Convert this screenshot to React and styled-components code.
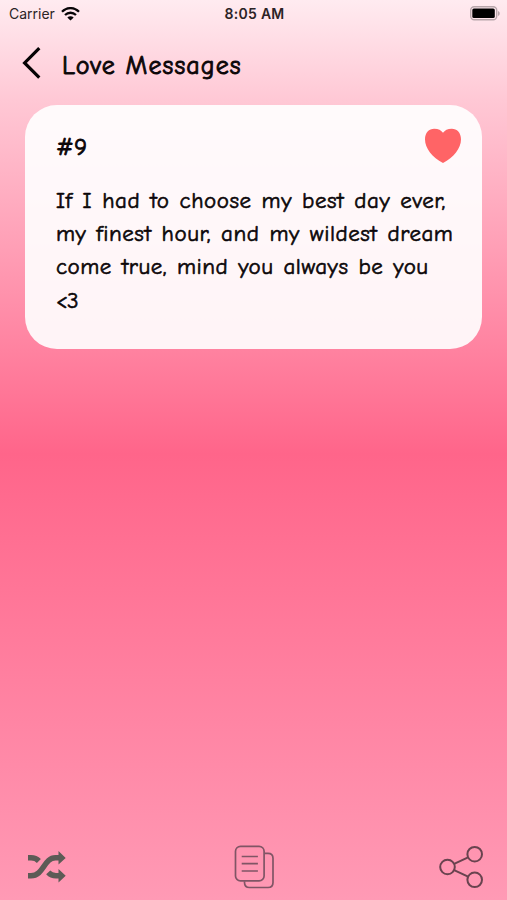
import React, { useState } from "react";
import styled, { createGlobalStyle } from "styled-components";

const GlobalStyle = createGlobalStyle`
  * {
    box-sizing: border-box;
  }
  body {
    margin: 0;
  }
  button {
    display: flex;
    padding: 0;
    border: none;
    background: none;
    cursor: pointer;
  }
  svg {
    display: block;
  }
`;

const Screen = styled.div`
  display: flex;
  flex-direction: column;
  height: 900px;
  color: #0b0608;
  background: linear-gradient(#ffebf0 0, #ffc8d5 100px, #ff658a 454px, #ff9ab5 900px);
  font-family: "Chalkboard SE", "Comic Neue", Lato, sans-serif;
`;

const StatusBar = styled.div`
  display: grid;
  grid-template-columns: 1fr auto 1fr;
  align-items: center;
  height: 27px;
  padding: 0 7px 0 9px;
  font-family: Inter, sans-serif;
  font-size: 14px;
  color: #2b2326;
`;

const Carrier = styled.div`
  display: flex;
  align-items: center;
  gap: 6px;
`;

const Clock = styled.div`
  font-weight: 600;
  letter-spacing: 0.3px;
`;

const Battery = styled.div`
  justify-self: end;
`;

const Header = styled.header`
  display: flex;
  align-items: center;
  height: 78px;
  padding: 0 0 7px 22px;
`;

const Title = styled.h1`
  margin: 7px 0 0 20px;
  font-size: 26px;
  font-weight: 500;
  line-height: 32px;
  letter-spacing: 1.1px;
  -webkit-text-stroke: 0.9px currentColor;
`;

const Card = styled.section`
  height: 244px;
  margin: 0 25px;
  padding: 22px 20px 0 31px;
  border-radius: 32px;
  background: rgba(255, 255, 255, 0.91);
`;

const CardTop = styled.div`
  display: flex;
  justify-content: space-between;
  align-items: flex-start;
  height: 57px;
`;

const Number = styled.div`
  font-size: 24px;
  line-height: 40px;
  letter-spacing: 0.6px;
  -webkit-text-stroke: 0.9px currentColor;
`;

const Message = styled.p`
  margin: 0;
  font-size: 23px;
  line-height: 33.2px;
  white-space: nowrap;
  word-spacing: 1.8px;
  -webkit-text-stroke: 0.6px currentColor;
`;

const Line = styled.span`
  display: block;
  letter-spacing: ${({ $spacing }) => $spacing}px;
`;

const Toolbar = styled.footer`
  display: flex;
  align-items: center;
  justify-content: space-between;
  height: 68px;
  margin-top: auto;
  padding: 1px 23px 0 27px;
`;

const WifiIcon = () => (
  <svg width="19" height="14" viewBox="0 0 19 14" fill="none" stroke="#080507" strokeWidth="2.3">
    <path d="M1 4.8C6-.1 13-.1 18 4.8" />
    <path d="M4 8C7.2 5 11.8 5 15 8" />
    <path d="M6.3 10.4 9.5 13.6l3.2-3.2c-1.8-1.6-4.6-1.6-6.4 0z" fill="#080507" stroke="none" />
  </svg>
);

const BatteryIcon = () => (
  <svg width="30" height="15" viewBox="0 0 30 15">
    <rect x=".7" y=".8" width="26" height="13" rx="3.5" fill="none" stroke="#b7a5aa" strokeWidth="1.4" />
    <rect x="2.3" y="2.5" width="22.5" height="9.6" rx="1.6" fill="#000" />
    <path d="M28 5v5c2.3-1 2.3-4 0-5z" fill="#b7a5aa" />
  </svg>
);

const BackIcon = () => (
  <svg width="20" height="32" viewBox="0 0 20 32" fill="none" stroke="#050304" strokeWidth="3.2">
    <path d="M17.3 1.2 2.6 15.9l14.7 14.8" />
  </svg>
);

const HeartIcon = ({ filled }) => (
  <svg width="38" height="36" viewBox="0 0 38 36">
    <path
      d="M19 36C8.3 30.5 1 21.5 1 12.3 1 5.7 5 1.7 10.200 1.700c4.200 0 7.100 1.600 8.800 4.100 1.700-2.500 4.600-4.100 8.800-4.100C33 1.700 37 5.700 37 12.300 37 21.500 29.700 30.500 19 36z"
      fill={filled ? "#ff6466" : "none"}
      stroke={filled ? "none" : "#ff6466"}
    />
  </svg>
);

const ShuffleIcon = () => (
  <svg width="40" height="34" viewBox="0 0 40 34" fill="none" stroke="#5d5b56" strokeWidth="5.6">
    <path d="M1 7.8h3c3.6 0 5.7.9 7.9 3.1" />
    <path d="M1 25.7h3c12.8 0 12.7-17.9 24.5-17.9H33" />
    <path d="M21.2 22.3c2.3 2.5 4.5 3.4 7.8 3.4h4" />
    <path d="M31.5 1.1 38.7 8l-7.2 6.6zM31.5 19l7.2 6.7-7.2 6.8z" fill="#5d5b56" stroke="none" />
  </svg>
);

const CopyIcon = () => (
  <svg width="42" height="44" viewBox="-2 0 42 44" fill="none" stroke="#805565" strokeWidth="1.7">
    <rect x="1.5" y="1.3" width="28.6" height="34.6" rx="5" />
    <path d="M30.5 8.3H34c3.2 0 5 1.8 5 5v24.2c0 3.2-1.8 5-5 5H15.5c-3.200 0-5-1.800-5-5v-1.300" />
    <path d="M7.7 11.5h16.2M7.7 18.7h16.2M7.7 26h16.2" />
  </svg>
);

const ShareIcon = () => (
  <svg width="45" height="44" viewBox="0 0 45 44" fill="none" stroke="#69434f" strokeWidth="2">
    <circle cx="8.5" cy="22" r="7.3" />
    <circle cx="35.7" cy="9.2" r="7.3" />
    <circle cx="35.7" cy="34.8" r="7.3" />
    <path d="m15.1 18.9 14-6.6M15.1 25.1l14 6.6" />
  </svg>
);

const messageLines = [
  { text: "If I had to choose my best day ever,", spacing: 0.56 },
  { text: "my finest hour, and my wildest dream", spacing: 0.53 },
  { text: "come true, mind you always be you", spacing: 0.5 },
  { text: "<3", spacing: -0.8 },
];

const App = () => {
  const [liked, setLiked] = useState(true);

  return (
    <Screen>
      <GlobalStyle />
      <StatusBar>
        <Carrier>
          Carrier <WifiIcon />
        </Carrier>
        <Clock>8:05 AM</Clock>
        <Battery>
          <BatteryIcon />
        </Battery>
      </StatusBar>
      <Header>
        <button aria-label="Back">
          <BackIcon />
        </button>
        <Title>Love Messages</Title>
      </Header>
      <Card>
        <CardTop>
          <Number>#9</Number>
          <button aria-label="Favorite" onClick={() => setLiked(!liked)}>
            <HeartIcon filled={liked} />
          </button>
        </CardTop>
        <Message>
          {messageLines.map(({ text, spacing }) => (
            <Line key={text} $spacing={spacing}>
              {text}
            </Line>
          ))}
        </Message>
      </Card>
      <Toolbar>
        <button aria-label="Shuffle">
          <ShuffleIcon />
        </button>
        <button aria-label="Copy">
          <CopyIcon />
        </button>
        <button aria-label="Share">
          <ShareIcon />
        </button>
      </Toolbar>
    </Screen>
  );
};

export default App;
